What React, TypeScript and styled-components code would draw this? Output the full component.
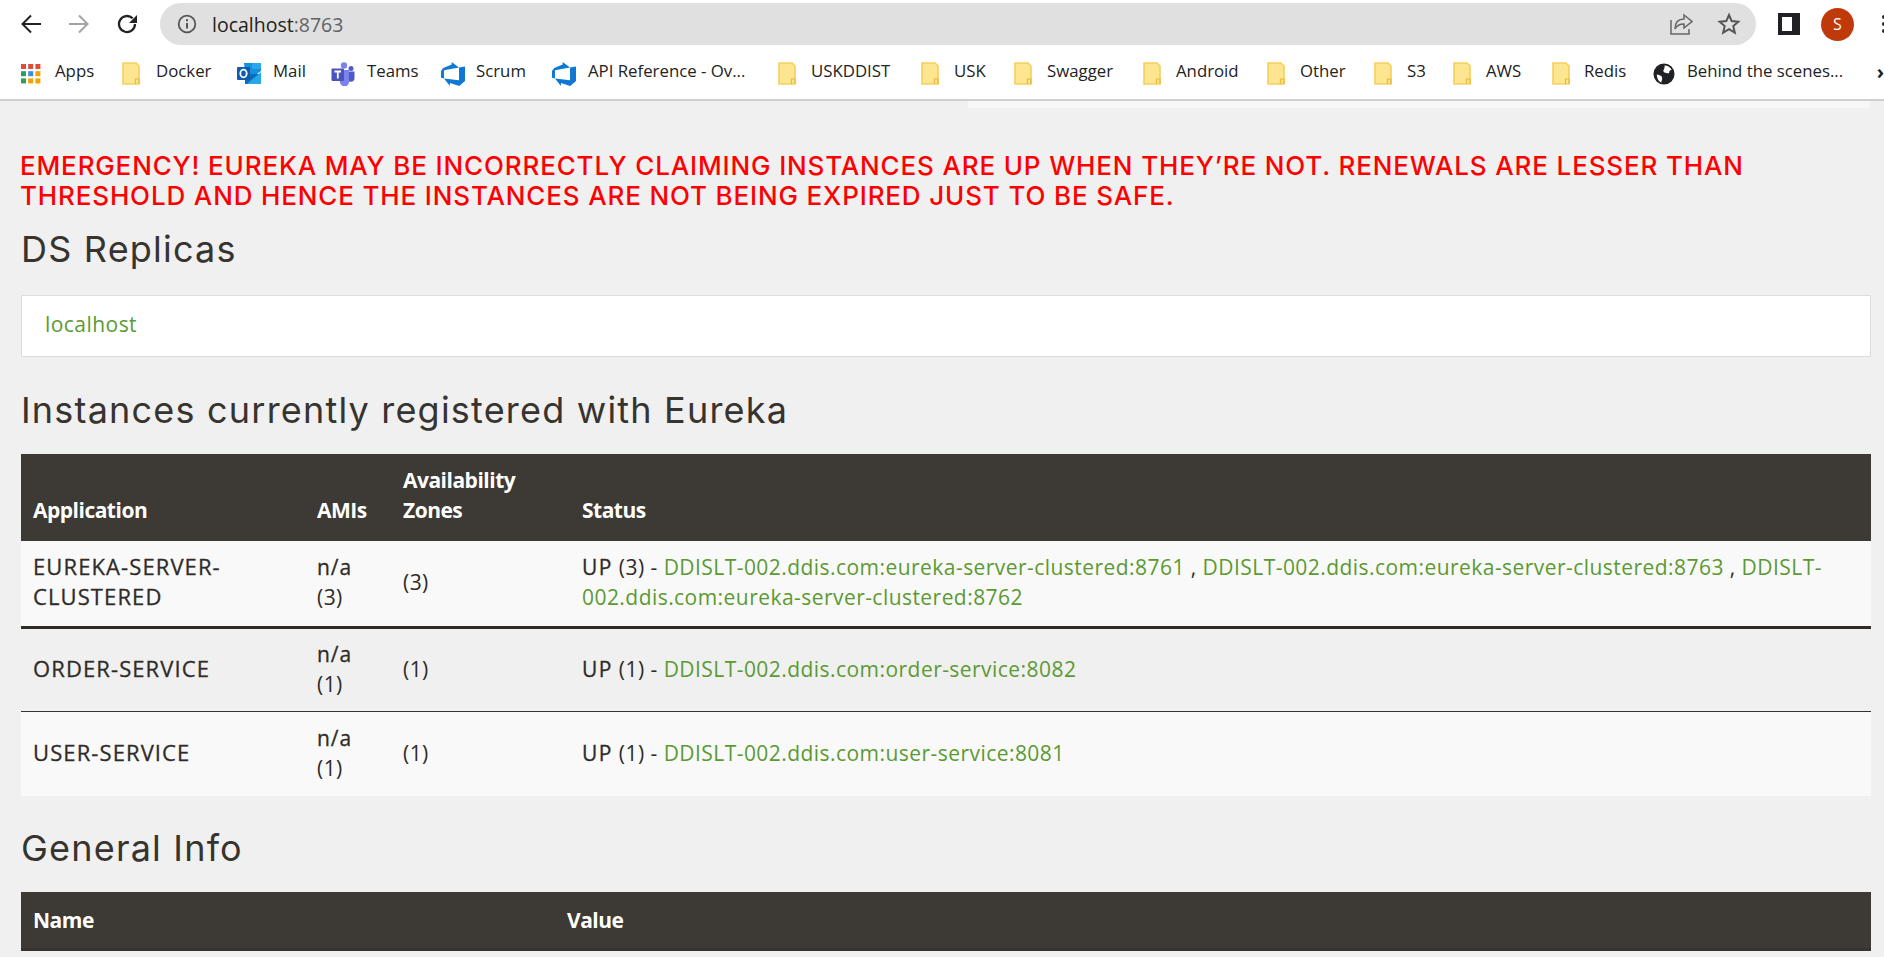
import React from 'react';
import styled, { createGlobalStyle } from 'styled-components';

const Global = createGlobalStyle`
  html, body { margin: 0; padding: 0; background: #f0f0f0; overflow: hidden; }
  #root { height: 957px; overflow: hidden; }
`;

const Toolbar = styled.div`
  height: 48px; background: #fff; display: flex; align-items: center; padding: 0 0 0 21px; box-sizing: border-box;
`;
const NavButton = styled.div`
  width: 48px; height: 24px; display: flex; align-items: center; flex: none;
`;
const UrlPill = styled.div`
  width: 1596px; height: 42px; border-radius: 21px; background: #e0e0e0; margin-left: -5px; display: flex; align-items: center;
  padding: 0 15px 0 17px; box-sizing: border-box; flex: none;
`;
const UrlHost = styled.span`
  font: 19.5px "Open Sans", sans-serif; color: #222; margin-left: 15px; flex: 1;
`;
const UrlPort = styled.span` color: #5f6368; `;
const PillIcons = styled.div` display: flex; align-items: center; gap: 24px; `;
const PanelToggle = styled.div`
  width: 22px; height: 22px; margin-left: 22px; flex: none; display: flex;
`;
const Avatar = styled.div`
  width: 33px; height: 33px; border-radius: 50%; background: #c0390b; color: #fff; display: flex; align-items: center; justify-content: center;
  font: 16px "Open Sans", sans-serif; margin-left: 21px; flex: none;
`;
const Dots = styled.div`
  display: flex; flex-direction: column; gap: 3px; margin-left: 28px; flex: none;
  span { width: 4px; height: 4px; background: #222; border-radius: 50%; display: block; }
`;
const BookmarkBar = styled.div`
  height: 51px; background: #fff; border-bottom: 2px solid #cfcfcf; display: flex; align-items: center; padding-left: 21px;
  font: 16.8px "Open Sans", sans-serif; color: #222; white-space: nowrap; position: relative;
`;
const Bookmark = styled.div<{ $w: number }>`
  width: ${p => p.$w}px; flex: none; display: flex; align-items: center; height: 30px;
`;
const IconSlot = styled.span<{ $w?: number }>`
  width: ${p => p.$w ?? 35}px; flex: none; display: flex; align-items: center;
`;
const Label = styled.span` position: relative; top: -3px; `;
const More = styled.span` position: absolute; right: 0; top: 10px; font-size: 20px; font-weight: 700; `;
const PeekStrip = styled.div`
  height: 7px; margin-left: 968px; margin-right: 14px; background: #f7f7f7;
`;

const Page = styled.main`
  padding: 0 13px 0 21px; font-family: "Open Sans", sans-serif; color: #37332f;
`;
const Alert = styled.h4`
  margin: 43px 0 0 -1px; font: 500 26px/30px Inter, sans-serif; letter-spacing: 0.85px; color: #ff0000; text-transform: uppercase; width: 1851px;
`;
const Heading = styled.h1<{ $top: number }>`
  margin: ${p => p.$top}px 0 0; font: 400 36px/44px Inter, sans-serif; color: #37332f; letter-spacing: 1.2px;
`;
const Panel = styled.div`
  margin-top: 24px; height: 62px; background: #fff; border: 1px solid #ddd; display: flex; align-items: center; padding: 0 0 4px 23px; box-sizing: border-box;
`;
const Link = styled.a`
  color: #5b9a33; text-decoration: none;
`;
const PanelLink = styled(Link)` font-size: 21px; letter-spacing: 0.45px; `;
const Table = styled.table`
  width: 100%; border-collapse: collapse; margin-top: 22px; table-layout: fixed; font-size: 21px; line-height: 30px; letter-spacing: 0.45px;
`;
const Head = styled.th<{ $w?: number }>`
  background: #3d3934; color: #fff; font-weight: 700; text-align: left; vertical-align: bottom; padding: 10px 12px 16px; letter-spacing: -0.5px;
  height: 87px; box-sizing: border-box; width: ${p => (p.$w ? p.$w + 'px' : 'auto')};
`;
const GeneralHead = styled(Head)` height: 57px; vertical-align: middle; padding: 8px 12px; border-bottom: 3px solid #37332f; `;
const Row = styled.tr<{ $odd: boolean; $h: number; $thick?: boolean }>`
  background: ${p => (p.$odd ? '#f9f9f9' : '#f0f0f0')}; height: ${p => p.$h}px;
  border-bottom: ${p => (p.$thick ? '3px solid #2f2c28' : '0')};
`;
const Cell = styled.td<{ $line?: boolean }>`
  padding: 0 12px 2px; vertical-align: middle; color: #2f2c28; overflow-wrap: anywhere;
  border-top: ${p => (p.$line ? '1px solid #37332f' : '0')};
`;
const AppCell = styled(Cell)` font-size: 22px; letter-spacing: 1.1px; padding-bottom: 4px; -webkit-text-stroke: 0.3px #2f2c28; `;
const Up = styled.b` font-weight: 400; letter-spacing: 0.9px; -webkit-text-stroke: 0.3px #2f2c28; `;
const StatusUp = styled(Up)` letter-spacing: 1.5px; `;

const ArrowBack = () => (
  <svg width="24" height="24" viewBox="0 0 24 24" fill="none" stroke="#222" strokeWidth="2"><path d="M20 12H1.500M10 3.500L1.500 12l8.500 8.500" /></svg>
);
const ArrowFwd = () => (
  <svg width="24" height="24" viewBox="0 0 24 24" fill="none" stroke="#a3a3a3" strokeWidth="2"><path d="M0 12h18.500M10 3.500l8.500 8.500-8.500 8.500" /></svg>
);
const Reload = () => (
  <svg width="24" height="24" viewBox="0 0 24 24" fill="none"><path d="M18 12a8 8 0 1 1-2.400-5.700" stroke="#222" strokeWidth="2.300" /><path d="M20 3v8h-8z" fill="#222" /></svg>
);
const Info = () => (
  <svg width="20" height="20" viewBox="0 0 20 20" fill="none" stroke="#555"><circle cx="10" cy="10" r="8.300" strokeWidth="1.800" /><path d="M10 9v5.500" strokeWidth="2" /><path d="M10 5.300v2" strokeWidth="2" /></svg>
);
const Share = () => (
  <svg width="24" height="24" viewBox="0 0 24 24" fill="none" stroke="#666" strokeWidth="1.500"><path d="M2 8v14h18v-5" /><path d="M15 3l8 6.500-8 6.500v-4c-4 0-7 1-9 5 0-6 3-10 9-10z" /></svg>
);
const Star = () => (
  <svg width="24" height="24" viewBox="0 0 24 24" fill="none" stroke="#555" strokeWidth="2"><path d="M12 3l2.700 6.100 6.600.6-5 4.400 1.500 6.500L12 17.200l-5.800 3.400 1.500-6.500-5-4.400 6.600-.6z" /></svg>
);
const SidePanel = () => (
  <svg width="22" height="22" viewBox="0 0 22 22"><path d="M0 0h22v22H0z" fill="#202124" /><path d="M4 4h10v14H4z" fill="#fff" /></svg>
);
const Grid = () => (
  <svg width="20" height="20" viewBox="0 0 20 20">
    {[0, 1, 2].map(r => [0, 1, 2].map(c => (
      <rect key={`${r}${c}`} x={c * 7.2} y={r * 7.2} width="5" height="5"
        fill={[['#e24a3b', '#e24a3b', '#e24a3b'], ['#2f9e5b', '#3b8de7', '#f4a300'], ['#2f9e5b', '#f4a300', '#f4a300']][r][c]} />
    )))}
  </svg>
);
const Folder = () => (
  <svg width="18" height="23" viewBox="0 0 18 23"><path d="M1 1h13l3 3v18H1z" fill="#fde68f" stroke="#f6cf5c" strokeWidth="1.600" /><path d="M13.500 22v-5h3.500v5" fill="none" stroke="#eab93d" strokeWidth="1.200" /></svg>
);
const Outlook = () => (
  <svg width="24" height="23" viewBox="0 0 24 23"><path d="M7 1h14l3 2v6l-8 6-8-6z" fill="#1490df" /><path d="M15 1h9v6h-9z" fill="#28a8ea" /><path d="M8 12h16v10H8z" fill="#0a6cbd" /><path d="M24 10v12H10z" fill="#28a8ea" /><rect x="0" y="5" width="13" height="13" rx="1" fill="#0f5ca8" /><ellipse cx="6.500" cy="11.500" rx="3.200" ry="3.900" fill="none" stroke="#fff" strokeWidth="1.800" /></svg>
);
const TeamsIcon = () => (
  <svg width="24" height="24" viewBox="0 0 24 24"><circle cx="13" cy="3.500" r="3.200" fill="#7b83eb" /><circle cx="20" cy="6.500" r="2.500" fill="#5059c9" /><path d="M16 9.500h7.500V16a3.700 3.700 0 0 1-7.500 0z" fill="#5059c9" /><path d="M7 8h11v11a4.500 4.500 0 0 1-9 1.500z" fill="#7b83eb" /><rect x="0.500" y="6.500" width="12.500" height="12.500" rx="1" fill="#4b53bc" /><path d="M3.500 9.500h6.500M6.800 9.500v7" stroke="#fff" strokeWidth="1.800" /></svg>
);
const Azure = () => (
  <svg width="24" height="24" viewBox="0 0 24 24"><path fill="#0f78d4" d="M0 8.877L2.247 5.910l8.405-3.416V.022l7.370 5.393L2.966 8.338v8.225L0 15.707zm24-4.450v14.651l-5.753 4.900-9.303-3.057v3.056l-5.978-7.416 15.057 1.798V5.415z" /></svg>
);
const Globe = () => (
  <svg width="22" height="22" viewBox="0 0 23 23"><circle cx="11.500" cy="11.500" r="11" fill="#202124" /><path d="M12 2.500c3 0 6 1.500 7.500 4.500-2 .5-3 2-2.500 3.500-2 1-3-.5-5-.5-1.500-1-1.500-2.500-.5-3.500.5-1.500 1-3 .5-4zM4 12c2 0 3 1 4.500 1.500 1.500 1 1 2.500 1 4-.5 1-1 2-.5 3-3-.8-5-4.500-5-8.500z" fill="#fff" /></svg>
);

const B = ({ w, slot, icon, text }: { w: number; slot?: number; icon: React.ReactNode; text: string }) => (
  <Bookmark $w={w}><IconSlot $w={slot}>{icon}</IconSlot><Label>{text}</Label></Bookmark>
);

export default function App() {
  return (
    <>
      <Global />
      <Toolbar>
        <NavButton><ArrowBack /></NavButton>
        <NavButton><ArrowFwd /></NavButton>
        <NavButton><Reload /></NavButton>
        <UrlPill>
          <Info />
          <UrlHost>localhost<UrlPort>:8763</UrlPort></UrlHost>
          <PillIcons><Share /><Star /></PillIcons>
        </UrlPill>
        <PanelToggle><SidePanel /></PanelToggle>
        <Avatar>S</Avatar>
        <Dots><span /><span /><span /></Dots>
      </Toolbar>
      <BookmarkBar>
        <B w={101} slot={34} icon={<Grid />} text="Apps" />
        <B w={115} slot={34} icon={<Folder />} text="Docker" />
        <B w={94} slot={36} icon={<Outlook />} text="Mail" />
        <B w={110} slot={36} icon={<TeamsIcon />} text="Teams" />
        <B w={111} slot={35} icon={<Azure />} text="Scrum" />
        <B w={226} slot={36} icon={<Azure />} text="API Reference - Ov..." />
        <B w={143} slot={33} icon={<Folder />} text="USKDDIST" />
        <B w={93} slot={33} icon={<Folder />} text="USK" />
        <B w={129} slot={33} icon={<Folder />} text="Swagger" />
        <B w={124} slot={33} icon={<Folder />} text="Android" />
        <B w={107} slot={33} icon={<Folder />} text="Other" />
        <B w={79} slot={33} icon={<Folder />} text="S3" />
        <B w={99} slot={33} icon={<Folder />} text="AWS" />
        <B w={101} slot={32} icon={<Folder />} text="Redis" />
        <B w={215} slot={34} icon={<Globe />} text="Behind the scenes..." />
        <More>›</More>
      </BookmarkBar>
      <PeekStrip />
      <Page>
        <Alert>Emergency! Eureka may be incorrectly claiming instances are up when they’re not. Renewals are lesser than threshold and hence the instances are not being expired just to be safe.</Alert>
        <Heading $top={16}>DS Replicas</Heading>
        <Panel><PanelLink href="#">localhost</PanelLink></Panel>
        <Heading $top={31}>Instances currently registered with Eureka</Heading>
        <Table>
          <thead>
            <tr>
              <Head $w={284}>Application</Head>
              <Head $w={86}>AMIs</Head>
              <Head $w={179}>Availability Zones</Head>
              <Head>Status</Head>
            </tr>
          </thead>
          <tbody>
            <Row $odd $h={86} $thick>
              <AppCell>EUREKA-SERVER-CLUSTERED</AppCell>
              <Cell><Up>n/a</Up><br />(3)</Cell>
              <Cell>(3)</Cell>
              <Cell><StatusUp>UP</StatusUp> (3) - <Link href="#">DDISLT-002.ddis.com:eureka-server-clustered:8761</Link> , <Link href="#">DDISLT-002.ddis.com:eureka-server-clustered:8763</Link> , <Link href="#">DDISLT-002.ddis.com:eureka-server-clustered:8762</Link></Cell>
            </Row>
            <Row $odd={false} $h={84}>
              <AppCell>ORDER-SERVICE</AppCell>
              <Cell><Up>n/a</Up><br />(1)</Cell>
              <Cell>(1)</Cell>
              <Cell><StatusUp>UP</StatusUp> (1) - <Link href="#">DDISLT-002.ddis.com:order-service:8082</Link></Cell>
            </Row>
            <Row $odd $h={85}>
              <AppCell $line>USER-SERVICE</AppCell>
              <Cell $line><Up>n/a</Up><br />(1)</Cell>
              <Cell $line>(1)</Cell>
              <Cell $line><StatusUp>UP</StatusUp> (1) - <Link href="#">DDISLT-002.ddis.com:user-service:8081</Link></Cell>
            </Row>
          </tbody>
        </Table>
        <Heading $top={30}>General Info</Heading>
        <Table>
          <thead>
            <tr>
              <GeneralHead $w={534}>Name</GeneralHead>
              <GeneralHead>Value</GeneralHead>
            </tr>
          </thead>
        </Table>
      </Page>
    </>
  );
}
